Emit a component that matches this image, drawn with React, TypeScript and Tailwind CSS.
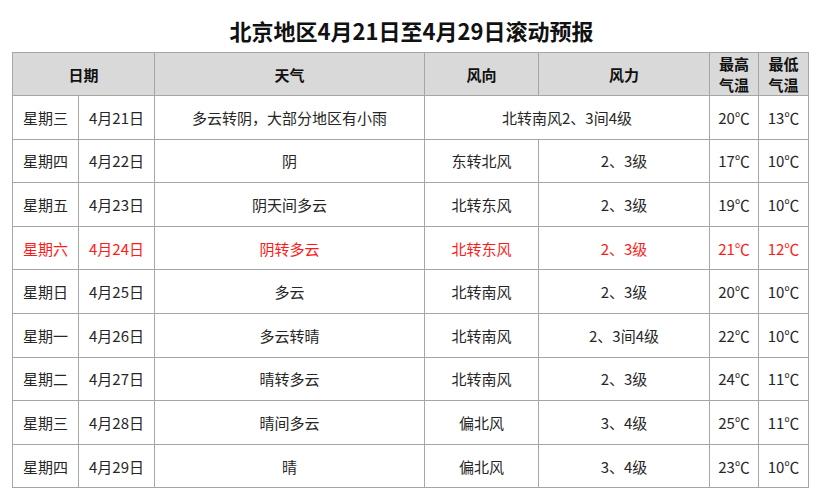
import React from "react";

type Row = { day: string; date: string; weather: string; dir?: string; force: string; hi: string; lo: string; red?: boolean; merged?: boolean };

const rows: Row[] = [
  { day: "星期三", date: "4月21日", weather: "多云转阴，大部分地区有小雨", force: "北转南风2、3间4级", hi: "20℃", lo: "13℃", merged: true },
  { day: "星期四", date: "4月22日", weather: "阴", dir: "东转北风", force: "2、3级", hi: "17℃", lo: "10℃" },
  { day: "星期五", date: "4月23日", weather: "阴天间多云", dir: "北转东风", force: "2、3级", hi: "19℃", lo: "10℃" },
  { day: "星期六", date: "4月24日", weather: "阴转多云", dir: "北转东风", force: "2、3级", hi: "21℃", lo: "12℃", red: true },
  { day: "星期日", date: "4月25日", weather: "多云", dir: "北转南风", force: "2、3级", hi: "20℃", lo: "10℃" },
  { day: "星期一", date: "4月26日", weather: "多云转晴", dir: "北转南风", force: "2、3间4级", hi: "22℃", lo: "10℃" },
  { day: "星期二", date: "4月27日", weather: "晴转多云", dir: "北转南风", force: "2、3级", hi: "24℃", lo: "11℃" },
  { day: "星期三", date: "4月28日", weather: "晴间多云", dir: "偏北风", force: "3、4级", hi: "25℃", lo: "11℃" },
  { day: "星期四", date: "4月29日", weather: "晴", dir: "偏北风", force: "3、4级", hi: "23℃", lo: "10℃" },
];

const td = "border border-[#a6a6a6] text-center align-middle p-0";

export default function App() {
  return (
    <div
      className="w-[821px] h-[500px] bg-white text-[#262626]"
      style={{ fontFamily: '"Noto Sans CJK SC", "Noto Sans", sans-serif' }}
    >
      <div className="h-[52px] flex items-center justify-center pt-[7px] pl-[2px]">
        <h1 className="text-[22px] font-bold leading-none text-[#111]">北京地区4月21日至4月29日滚动预报</h1>
      </div>
      <table className="ml-[12px] border-collapse table-fixed w-[796px] text-[15px] leading-none">
        <colgroup>
          <col className="w-[66px]" />
          <col className="w-[76px]" />
          <col className="w-[270px]" />
          <col className="w-[114px]" />
          <col className="w-[171px]" />
          <col className="w-[49px]" />
          <col className="w-[50px]" />
        </colgroup>
        <thead>
          <tr className="h-[43px] bg-[#d9d9d9] font-bold text-[#111]">
            <th className={td} colSpan={2}>日期</th>
            <th className={td}>天气</th>
            <th className={td}>风向</th>
            <th className={td}>风力</th>
            <th className={`${td} leading-[21px]`}>最高<br />气温</th>
            <th className={`${td} leading-[21px]`}>最低<br />气温</th>
          </tr>
        </thead>
        <tbody>
          {rows.map((r, i) => (
            <tr key={i} className={`h-[43.6px] ${r.red ? "text-[#ff1a1a]" : ""}`}>
              <td className={td}>{r.day}</td>
              <td className={td}>{r.date}</td>
              <td className={td}>{r.weather}</td>
              {r.merged ? (
                <td className={td} colSpan={2}>{r.force}</td>
              ) : (
                <>
                  <td className={td}>{r.dir}</td>
                  <td className={td}>{r.force}</td>
                </>
              )}
              <td className={td}>{r.hi}</td>
              <td className={td}>{r.lo}</td>
            </tr>
          ))}
        </tbody>
      </table>
    </div>
  );
}
